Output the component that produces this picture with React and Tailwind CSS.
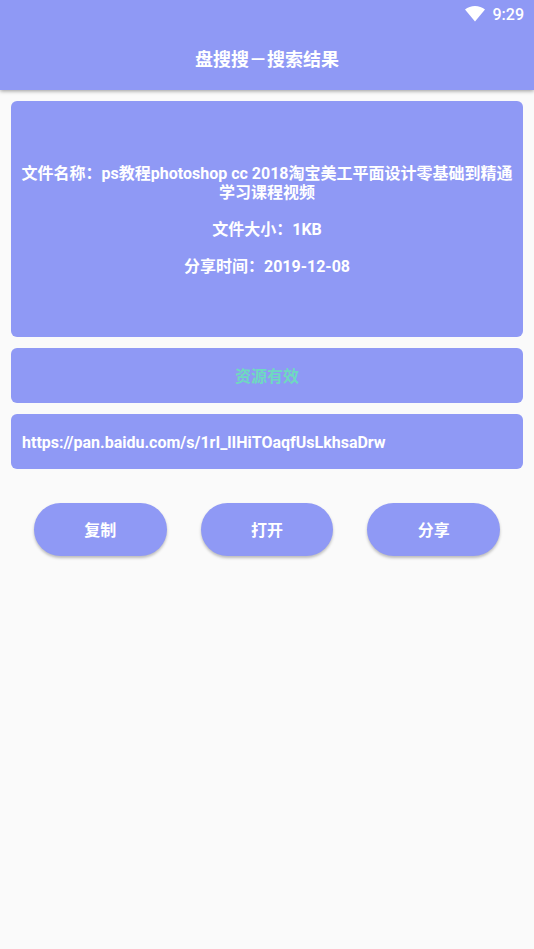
const details = [
  { label: '文件名称', value: 'ps教程photoshop cc 2018淘宝美工平面设计零基础到精通学习课程视频' },
  { label: '文件大小', value: '1KB' },
  { label: '分享时间', value: '2019-12-08' },
]

const actions = ['复制', '打开', '分享']

function WifiIcon() {
  return (
    <svg className="h-4 w-5" viewBox="0 0 20 16" fill="#ffffff" aria-hidden="true">
      <path d="M0 3.600C2.800 1.300 6.200 0 10 0s7.200 1.300 10 3.600L10 15.600z" />
    </svg>
  )
}

function Header() {
  return (
    <header className="bg-[#8f99f5] text-white shadow-[0_1px_4px_rgba(0,0,0,0.4)]">
      <div className="flex h-7 items-center justify-end gap-2 pr-[10px]">
        <WifiIcon />
        <span className="pt-0.5 text-base font-medium">9:29</span>
      </div>
      <h1 className="flex h-[62px] items-center justify-center pt-0.5 text-lg font-bold">盘搜搜－搜索结果</h1>
    </header>
  )
}

function App() {
  return (
    <div className="min-h-screen bg-[#fafafa] font-['Roboto','Noto_Sans_CJK_SC',sans-serif]">
      <Header />
      <main className="flex flex-col gap-[11px] px-[11px] pt-[11px] text-base font-bold text-white">
        <section className="flex min-h-[236px] flex-col justify-center gap-[18px] rounded-md bg-[#8f99f5] px-2 pt-0.5 text-center leading-[19px]">
          {details.map(({ label, value }) => (
            <p key={label}>{label}：{value}</p>
          ))}
        </section>
        <p className="flex h-[55px] items-center justify-center rounded-md bg-[#8f99f5] pt-0.5 text-[#6ed9c0]">资源有效</p>
        <p className="flex h-[55px] items-center rounded-md bg-[#8f99f5] px-[11px] pt-0.5">
          https://pan.baidu.com/s/1rI_lIHiTOaqfUsLkhsaDrw
        </p>
        <div className="grid grid-cols-3 gap-[34px] px-[23px] pt-[23px]">
          {actions.map((name) => (
            <button key={name} type="button" className="h-[53px] rounded-full bg-[#8f99f5] pt-0.5 shadow-[0_2px_3px_rgba(0,0,0,0.25)]">
              {name}
            </button>
          ))}
        </div>
      </main>
    </div>
  )
}

export default App
